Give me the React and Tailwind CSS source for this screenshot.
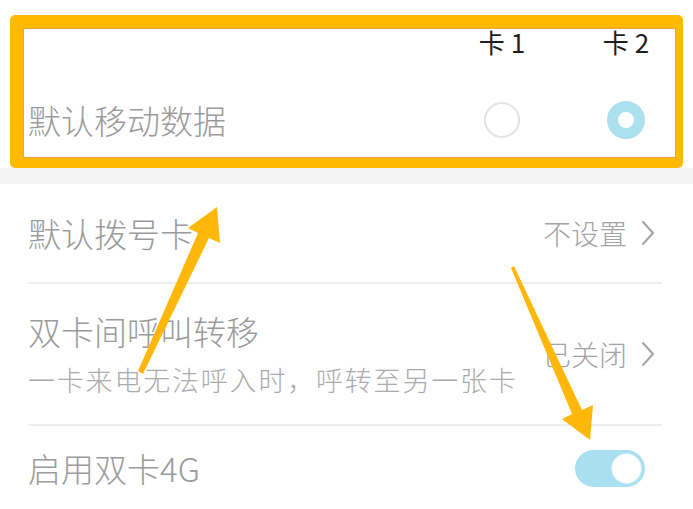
import React from "react";

const cjk = { fontFamily: "'Noto Sans CJK SC', 'Noto Sans', sans-serif" };

function Chevron() {
  return (
    <svg width="14" height="26" viewBox="0 0 14 26" className="shrink-0">
      <path d="M2 2 L12 13 L2 24" fill="none" stroke="#a3a3a3" strokeWidth="2" strokeLinecap="round" strokeLinejoin="round" />
    </svg>
  );
}

export default function App() {
  return (
    <div className="relative w-[693px] h-[509px] bg-white overflow-hidden font-light" style={cjk}>
      {/* highlighted section */}
      <div className="pt-[15px] px-[10px] bg-white">
        <div className="h-[153px] rounded-[5px] border-[#FFBA00] border-t-[13px] border-l-[13px] border-r-[7px] border-b-[10px] bg-[#f3a32a] p-[1px]">
          <div className="h-full bg-white flex flex-col pl-[4px] pr-[19px]">
            <div className="h-[30px] flex items-center mt-[-2px]">
              <div className="flex-1" />
              <div className="w-[60px] text-center text-[26px] leading-none font-normal text-[#1e1e1e]">卡 1</div>
              <div className="w-[64px]" />
              <div className="w-[60px] text-center text-[26px] leading-none font-normal text-[#1e1e1e]">卡 2</div>
            </div>
            <div className="h-[40px] mt-[43px] flex items-center">
              <div className="flex-1 text-[33px] leading-none text-[#9b9b9b]">默认移动数据</div>
              <div className="w-[60px] flex justify-center">
                <div className="w-[36px] h-[36px] rounded-full border-2 border-[#e3e3e3]" />
              </div>
              <div className="w-[64px]" />
              <div className="w-[60px] flex justify-center">
                <div className="w-[38px] h-[38px] rounded-full border-[11px] border-[#ade0ee] bg-white" />
              </div>
            </div>
          </div>
        </div>
      </div>
      <div className="h-[16px] bg-[#f4f4f4]" />

      {/* list */}
      <div className="pl-[28px] pr-[31px]">
        <div className="h-[100px] flex items-center border-b-2 border-[#eeeeee]">
          <div className="flex-1 text-[33px] leading-none text-[#9b9b9b]">默认拨号卡</div>
          <div className="flex items-center gap-[14px] mr-[7px]">
            <span className="text-[28px] leading-none text-[#a3a3a3]">不设置</span>
            <Chevron />
          </div>
        </div>
        <div className="h-[142px] flex items-center border-b-2 border-[#eeeeee]">
          <div className="flex-1 flex flex-col gap-[18px] mt-[-1px]">
            <div className="text-[33px] leading-none text-[#9b9b9b]">双卡间呼叫转移</div>
            <div className="text-[27px] leading-none text-[#ababab] tracking-[1.8px]">一卡来电无法呼入时，呼转至另一张卡</div>
          </div>
          <div className="flex items-center gap-[14px] mr-[7px]">
            <span className="text-[28px] leading-none text-[#a3a3a3]">已关闭</span>
            <Chevron />
          </div>
        </div>
        <div className="h-[84px] flex items-center">
          <div className="flex-1 text-[33px] leading-none text-[#9b9b9b]">启用双卡4G</div>
          <div className="w-[70px] h-[37px] rounded-full bg-[#a9e0ef] flex items-center justify-end pr-[3px] mr-[17px]">
            <div className="w-[31px] h-[31px] rounded-full bg-white border border-[#d6eef5]" />
          </div>
        </div>
      </div>

      {/* annotation arrows */}
      <svg className="absolute inset-0 pointer-events-none" width="693" height="509" viewBox="0 0 693 509">
        <polygon points="138,371 198,233 188,228 217,207 220,243 209,238 143,374" fill="#FFB80A" />
        <polygon points="511,268 514,266 582,410 593,405 590,440 562,419 572,414" fill="#FFB80A" />
      </svg>
    </div>
  );
}
